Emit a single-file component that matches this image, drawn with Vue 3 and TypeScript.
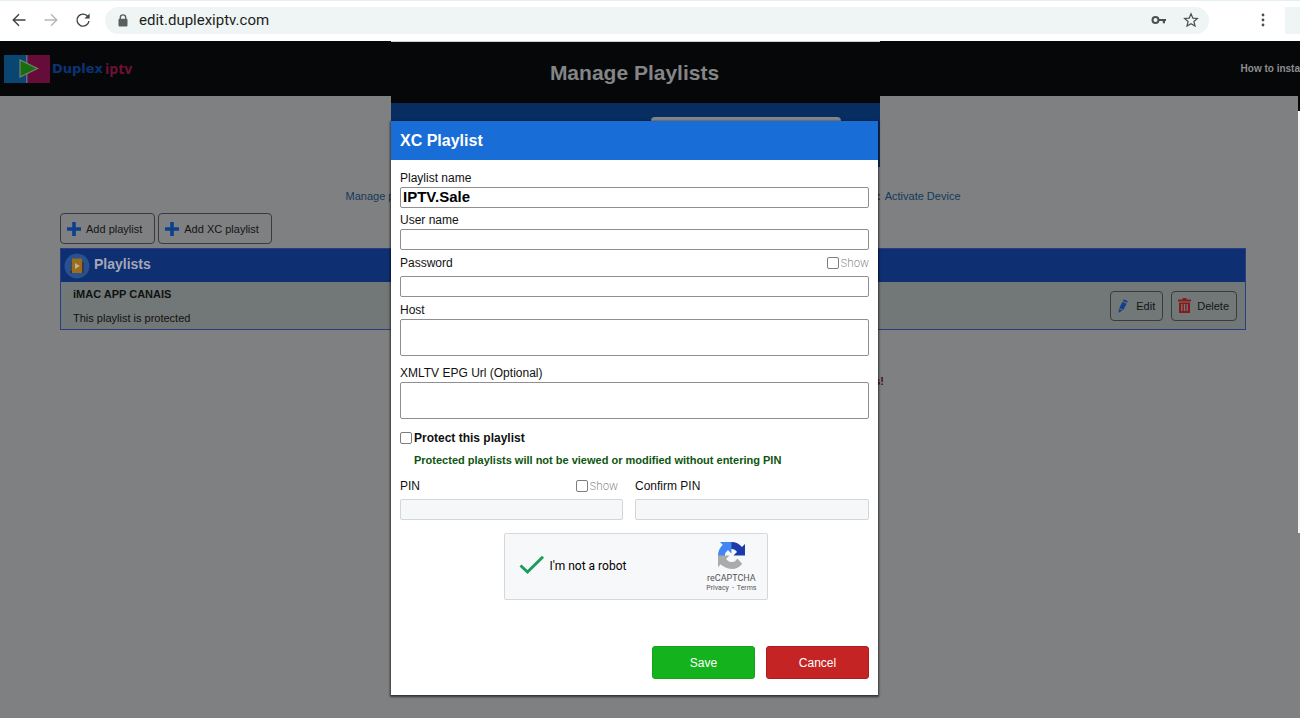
<script setup lang="ts">
import { ref } from 'vue'

const address = ref('edit.duplexiptv.com')
const playlistName = ref('IPTV.Sale')
const userName = ref('')
const password = ref('')
const host = ref('')
const epgUrl = ref('')
const showPassword = ref(false)
const protect = ref(false)
const pin = ref('')
const confirmPin = ref('')
const showPin = ref(false)
const human = ref(true)
</script>

<template>
  <div class="screen">
    <div class="toolbar">
      <button class="tool" aria-label="Back">
        <svg width="16" height="16" viewBox="0 0 16 16"><path d="M14.5 8H2.5M8 2.2L2.2 8 8 13.8" fill="none" stroke="#3f4346" stroke-width="1.4" /></svg>
      </button>
      <button class="tool" aria-label="Forward">
        <svg width="16" height="16" viewBox="0 0 16 16"><path d="M1.5 8h12M8 2.2L13.8 8 8 13.8" fill="none" stroke="#b4b7b9" stroke-width="1.4" /></svg>
      </button>
      <button class="tool" aria-label="Reload">
        <svg width="16" height="16" viewBox="0 0 16 16"><path d="M13.2 5A6 6 0 1 0 14 9" fill="none" stroke="#3f4346" stroke-width="1.4" /><path d="M14.6 1.4v5.2H9.4z" fill="#3f4346" /></svg>
      </button>
      <div class="address">
        <svg width="10" height="13" viewBox="0 0 10 13"><path d="M2.3 6V3.6a2.7 2.7 0 0 1 5.4 0V6" fill="none" stroke="#5a5e61" stroke-width="1.4" /><rect x="0.5" y="4.8" width="9" height="7.6" rx="1" fill="#5a5e61" /></svg>
        <input v-model="address" class="url" type="text" aria-label="Address" />
        <button class="tool" aria-label="Passwords">
          <svg width="16" height="10" viewBox="0 0 16 10"><circle cx="4.5" cy="5" r="3" fill="none" stroke="#4b4f52" stroke-width="2" /><path d="M7.5 5H15M12.9 5v3.2" fill="none" stroke="#4b4f52" stroke-width="2.2" /></svg>
        </button>
        <button class="tool" aria-label="Bookmark">
          <svg width="16" height="16" viewBox="0 0 16 16"><path d="M8 1.8l1.8 4.3 4.6.4-3.5 3 1.1 4.6L8 11.7l-4 2.4 1.1-4.6-3.5-3 4.6-.4z" fill="none" stroke="#4b4f52" stroke-width="1.2" /></svg>
        </button>
      </div>
      <button class="tool menu" aria-label="Menu">
        <svg width="4" height="14" viewBox="0 0 4 14" fill="#4b4f52"><circle cx="2" cy="2" r="1.4" /><circle cx="2" cy="7" r="1.4" /><circle cx="2" cy="12" r="1.4" /></svg>
      </button>
      <div class="corner"></div>
    </div>

    <div class="page">
      <header class="site-head">
        <a class="brand" href="#">
          <svg width="46" height="28" viewBox="0 0 46 28"><rect width="23" height="28" fill="#0a4672" /><rect x="23" width="23" height="28" fill="#650d38" /><path d="M22.8 0v28" stroke="#6e7c91" stroke-width="1.2" /><path d="M16 5v17L33.500 13.500z" fill="#176d10" stroke="#76806f" stroke-width="1.2" /></svg>
          <span class="duplex">Duplex</span><span class="iptv">iptv</span>
        </a>
        <a class="install" href="#">How to insta</a>
      </header>

      <main class="content">
        <nav class="links">
          <a href="#">Manage playlists</a>
          <span><b class="sep">:</b><a href="#">Activate Device</a></span>
        </nav>
        <div class="adders">
          <button class="ghost">
            <svg width="14" height="14" viewBox="0 0 14 14"><path d="M7 0v14M0 7h14" stroke="#0d3f8c" stroke-width="3.6" /></svg>Add playlist
          </button>
          <button class="ghost">
            <svg width="14" height="14" viewBox="0 0 14 14"><path d="M7 0v14M0 7h14" stroke="#0d3f8c" stroke-width="3.6" /></svg>Add XC playlist
          </button>
        </div>
        <section class="lists">
          <h2>
            <svg width="26" height="26" viewBox="0 0 26 26"><circle cx="13" cy="13" r="12.500" fill="#28518f" /><rect x="6" y="9" width="4" height="11" fill="#3a4a60" /><rect x="16" y="9" width="4" height="11" fill="#3a3a4c" /><rect x="6" y="18" width="14" height="2" fill="#3c3040" /><rect x="8" y="5.500" width="10" height="14.500" fill="#9c6c18" /><path d="M11 10v6l5-3z" fill="#b8b2a0" /></svg>
            <span>Playlists</span>
          </h2>
          <div class="entry">
            <div class="about">
              <strong>iMAC APP CANAIS</strong>
              <span>This playlist is protected</span>
            </div>
            <button class="ghost small">
              <svg width="13" height="14" viewBox="0 0 13 14"><path d="M6.800 0.300L10.800 2.200 10 3.800 6 1.900zM5.500 2.800L9.600 4.800 6.300 10.900 2.300 8.900zM1.900 9.800L5.400 11.500 1.700 13.800z" fill="#123f8e" /></svg>Edit
            </button>
            <button class="ghost small">
              <svg width="13" height="15" viewBox="0 0 13 15"><path d="M4.500 0h4v1.500H13v2H0v-2h4.500zM1 4.500h11V15H1zM3.200 6v7h1.300V6zM5.900 6v7h1.300V6zM8.500 6v7h1.300V6z" fill="#851b1f" fill-rule="evenodd" /></svg>Delete
            </button>
          </div>
        </section>
        <p class="notice">s!</p>
      </main>

      <div class="scrollbar"></div>

      <div class="overlay">
        <div class="panel">
          <h1>Manage Playlists</h1>
          <div class="panel-body"><div class="panel-field"></div></div>
        </div>
        <form class="dialog" role="dialog" aria-labelledby="dlg-title" @submit.prevent>
          <h2 id="dlg-title">XC Playlist</h2>
          <div class="fields">
            <label for="name">Playlist name</label>
            <input id="name" v-model="playlistName" class="box filled" type="text" />
            <label for="user" class="second">User name</label>
            <input id="user" v-model="userName" class="box" type="text" />
            <div class="row pass">
              <label for="password">Password</label>
              <label class="show"><input v-model="showPassword" type="checkbox" />Show</label>
            </div>
            <input id="password" v-model="password" class="box" :type="showPassword ? 'text' : 'password'" />
            <label for="host" class="host">Host</label>
            <textarea id="host" v-model="host" class="box tall"></textarea>
            <label for="epg" class="epg">XMLTV EPG Url (Optional)</label>
            <textarea id="epg" v-model="epgUrl" class="box tall"></textarea>
            <label class="protect"><input v-model="protect" type="checkbox" />Protect this playlist</label>
            <p class="hint">Protected playlists will not be viewed or modified without entering PIN</p>
            <div class="pins">
              <div class="pin">
                <div class="row">
                  <label for="pin">PIN</label>
                  <label class="show inset"><input v-model="showPin" type="checkbox" />Show</label>
                </div>
                <input id="pin" v-model="pin" class="box off" disabled :type="showPin ? 'text' : 'password'" />
              </div>
              <div class="pin">
                <div class="row"><label for="confirm">Confirm PIN</label></div>
                <input id="confirm" v-model="confirmPin" class="box off" type="password" disabled />
              </div>
            </div>
            <div class="captcha">
              <label class="robot">
                <span class="mark">
                  <input v-model="human" type="checkbox" />
                  <svg v-if="human" width="26" height="24" viewBox="0 0 26 24"><path d="M1.500 10.500L8.500 17 24 1.800" fill="none" stroke="#1c9c5a" stroke-width="3" /></svg>
                </span>
                I'm not a robot
              </label>
              <div class="badge">
                <svg width="27" height="27" viewBox="0 0 64 64">
                  <path fill="#1c3aa9" d="M64 31.955l-.033-1.370V4.687l-7.160 7.160C50.948 4.674 42.033.093 32.050.093c-10.400 0-19.622 4.960-25.458 12.640l11.736 11.860a15.550 15.550 0 0 1 4.754-5.334c2.050-1.600 4.952-2.906 8.968-2.906.485 0 .860.057 1.135.163 4.976.393 9.288 3.140 11.828 7.124l-8.307 8.307L64 31.953" />
                  <path fill="#4285f4" d="M31.862.094l-1.370.033H4.594l7.160 7.160C4.580 13.147 0 22.060 0 32.046c0 10.400 4.960 19.622 12.640 25.458L24.500 45.768a15.550 15.550 0 0 1-5.334-4.754c-1.600-2.050-2.906-4.952-2.906-8.968 0-.485.057-.860.163-1.135.393-4.976 3.140-9.288 7.124-11.828l8.307 8.307L31.860.095" />
                  <path fill="#ababab" d="M.001 32.045l.033 1.370v25.898l7.160-7.160c5.860 7.173 14.774 11.754 24.760 11.754 10.400 0 19.622-4.960 25.458-12.640l-11.736-11.860a15.550 15.550 0 0 1-4.754 5.334c-2.050 1.600-4.952 2.906-8.968 2.906-.485 0-.860-.057-1.135-.163-4.976-.393-9.288-3.140-11.828-7.124l8.307-8.307c-10.522.040-22.400.066-27.295-.005" />
                </svg>
                <span class="brandname">reCAPTCHA</span>
                <span class="legal"><a href="#">Privacy</a><span>-</span><a href="#">Terms</a></span>
              </div>
            </div>
            <div class="actions">
              <button class="save" type="submit">Save</button>
              <button class="cancel" type="button">Cancel</button>
            </div>
          </div>
        </form>
      </div>
    </div>
  </div>
</template>

<style>
body {
  margin: 0;
}
</style>

<style scoped>
.screen,
.screen * {
  box-sizing: border-box;
}
.screen {
  display: flex;
  flex-direction: column;
  min-height: 100vh;
  font-family: "Liberation Sans", Arial, sans-serif;
  font-size: 12px;
  color: #111;
}
button,
input,
textarea {
  font: inherit;
  color: inherit;
  margin: 0;
}
a {
  color: inherit;
  text-decoration: none;
}
h1,
h2,
p {
  margin: 0;
}
.toolbar {
  display: flex;
  align-items: center;
  height: 41px;
  padding: 0 0 2px 11px;
  gap: 16px;
  background: #fff;
  border-top: 1px solid #e4eff2;
}
.tool {
  display: flex;
  padding: 0;
  border: 0;
  background: none;
}
.address {
  flex: 1;
  display: flex;
  align-items: center;
  height: 27px;
  margin-left: -2px;
  padding: 0 10px 0 13px;
  gap: 16px;
  border-radius: 14px;
  background: #eff4f4;
}
.url {
  flex: 1;
  min-width: 0;
  margin-left: -5px;
  padding: 0;
  border: 0;
  outline: 0;
  background: none;
  font-family: Roboto, sans-serif;
  font-size: 15px;
  color: #1c1f21;
}
.menu {
  margin-left: 36px;
}
.corner {
  width: 15px;
  height: 27px;
  margin-left: 4px;
  background: #eff4f4;
}
.page {
  position: relative;
  flex: 1;
  background: #7f8081;
}
.site-head {
  display: flex;
  align-items: center;
  justify-content: space-between;
  height: 55px;
  padding: 0 0 0 4px;
  background: #060709;
}
.brand {
  display: flex;
  align-items: center;
  font-family: "DejaVu Sans", sans-serif;
  font-weight: bold;
}
.duplex {
  margin-left: 2px;
  font-size: 13px;
  color: #0b3475;
}
.iptv {
  margin-left: 2px;
  font-family: "Open Sans", sans-serif;
  font-size: 14px;
  color: #6d1236;
}
.install {
  font-size: 10px;
  font-weight: bold;
  color: #8d8e8f;
}
.content {
  padding: 92px 54px 0 60px;
  font-size: 11px;
}
.links {
  display: flex;
  justify-content: space-between;
  max-width: 615px;
  height: 16px;
  margin: 0 auto;
  line-height: 16px;
  color: #15395a;
}
.sep {
  margin-right: 4px;
  color: #5a1717;
}
.adders {
  display: flex;
  gap: 3px;
  margin: 9px 0 4px;
}
.ghost {
  display: flex;
  align-items: center;
  gap: 5px;
  height: 31px;
  padding: 0 12px 0 6px;
  border: 1px solid #3a3b3c;
  border-radius: 4px;
  background: none;
  color: #141516;
}
.lists {
  border: 1px solid #2c3d80;
}
.lists h2 {
  display: flex;
  align-items: center;
  gap: 4px;
  height: 33px;
  padding-left: 3px;
  background: #0f2f73;
  font-size: 14px;
  color: #a3a8b4;
}
.lists h2 span {
  padding-bottom: 3px;
}
.entry {
  display: flex;
  align-items: center;
  gap: 8px;
  height: 47px;
  padding: 0 8px 0 12px;
  background: #717877;
}
.about {
  flex: 1;
  display: flex;
  flex-direction: column;
  gap: 10px;
  line-height: 14px;
}
.small {
  gap: 6px;
  height: 30px;
  padding: 0 7px 0 6px;
}
.notice {
  max-width: 462px;
  margin: 43px auto 0;
  text-align: right;
  line-height: 16px;
  font-weight: bold;
  color: #4f0a12;
}
.scrollbar {
  position: absolute;
  top: 55px;
  right: 0;
  width: 2px;
  height: 437px;
  border-top: 15px solid #060709;
  background: #f4f5f5;
}
.overlay {
  position: absolute;
  top: 0;
  left: 391px;
  right: 422px;
}
.panel {
  position: absolute;
  top: 0;
  left: 0;
  right: -2px;
  border-top: 1px solid #c9d2cd;
  background: #060709;
}
.panel h1 {
  height: 61px;
  padding-right: 2px;
  line-height: 61px;
  text-align: center;
  font-size: 21px;
  color: #848586;
}
.panel-body {
  height: 64px;
  padding: 14px 39px 0 260px;
  background: #082e61;
}
.panel-field {
  height: 20px;
  border-radius: 4px;
  background: #848687;
}
.dialog {
  position: relative;
  margin-top: 80px;
  background: #fff;
  box-shadow: 0 1px 2px 1px rgba(0, 0, 0, 0.6);
}
.dialog h2 {
  height: 39px;
  padding-left: 9px;
  line-height: 40px;
  background: #196dd6;
  font-size: 16px;
  color: #fff;
}
.fields {
  display: flex;
  flex-direction: column;
  padding: 9px 9px 16px;
}
.fields label {
  line-height: 19px;
  height: 18px;
}
.second {
  margin-top: 3px;
}
.box {
  display: block;
  width: 100%;
  height: 21px;
  padding: 0 2px;
  border: 1px solid #8f8f8f;
  border-radius: 2px;
  outline: 0;
  background: #fff;
}
.filled {
  padding-bottom: 2px;
  font-size: 15px;
  font-weight: bold;
  color: #000;
}
.tall {
  height: 37px;
  resize: none;
}
.off {
  border-color: #d3d6d9;
  background: #f6f7f9;
}
.row {
  display: flex;
  justify-content: space-between;
  height: 18px;
}
.pass {
  margin: 4px 0;
}
.show,
.protect {
  display: flex;
  align-items: center;
  gap: 2px;
}
.show {
  font-family: Inter, sans-serif;
  font-size: 11px;
  font-weight: 200;
  color: #666;
}
.inset {
  margin-right: 5px;
}
input[type="checkbox"] {
  appearance: none;
  width: 12px;
  height: 12px;
  border: 1px solid #7d7d7d;
  border-radius: 2px;
  background: #fff;
}
input[type="checkbox"]:checked {
  background: #196dd6;
}
.host {
  margin-top: 4px;
}
.epg {
  margin-top: 8px;
}
.protect {
  margin-top: 10px;
  font-weight: bold;
}
.hint {
  margin: 4px 0 0 14px;
  line-height: 18px;
  font-size: 11px;
  font-weight: bold;
  color: #0d560f;
}
.pins {
  display: grid;
  grid-template-columns: 223fr 234fr;
  gap: 12px;
  margin-top: 8px;
}
.pin {
  display: flex;
  flex-direction: column;
  gap: 4px;
}
.captcha {
  align-self: center;
  display: flex;
  align-items: center;
  justify-content: space-between;
  width: 264px;
  height: 67px;
  margin: 13px 0 0 2px;
  padding: 0 10px 0 14px;
  border: 1px solid #d6d7d9;
  border-radius: 2px;
  background: #f7f8fa;
  font-family: Roboto, sans-serif;
}
.fields .robot {
  display: flex;
  align-items: center;
  gap: 5px;
  height: 24px;
  color: #000;
}
.mark {
  display: grid;
  place-items: center;
}
.mark > * {
  grid-area: 1 / 1;
}
.mark input[type="checkbox"] {
  border-color: transparent;
  background: none;
}
.badge {
  display: flex;
  flex-direction: column;
  align-items: center;
  padding-top: 2px;
  color: #555;
}
.brandname {
  margin-top: 4px;
  font-size: 9px;
  line-height: 11px;
}
.legal {
  display: flex;
  gap: 3px;
  font-size: 7px;
  line-height: 9px;
}
.actions {
  display: flex;
  justify-content: flex-end;
  gap: 11px;
  margin-top: 46px;
}
.actions button {
  width: 103px;
  height: 33px;
  border: 1px solid #10a51c;
  border-radius: 3px;
  background: #14b31e;
  color: #fff;
}
.actions .cancel {
  border-color: #b01c1e;
  background: #c42424;
}
</style>
